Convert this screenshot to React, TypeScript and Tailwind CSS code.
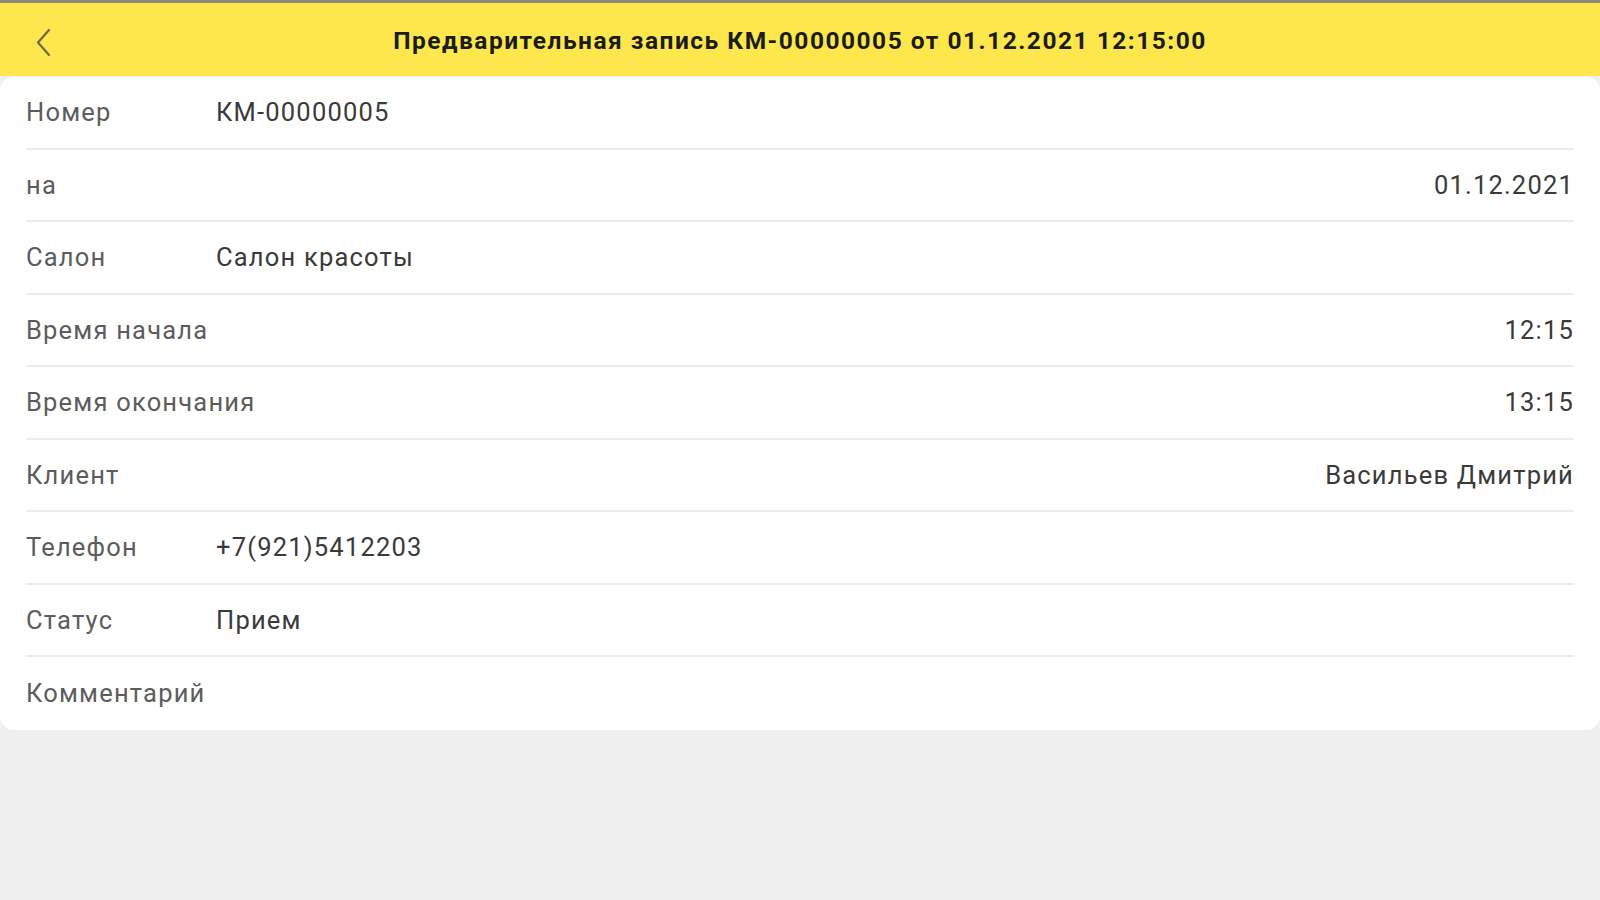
const rows: { label: string; value: string; right?: boolean }[] = [
  { label: "Номер", value: "КМ-00000005" },
  { label: "на", value: "01.12.2021", right: true },
  { label: "Салон", value: "Салон красоты" },
  { label: "Время начала", value: "12:15", right: true },
  { label: "Время окончания", value: "13:15", right: true },
  { label: "Клиент", value: "Васильев Дмитрий", right: true },
  { label: "Телефон", value: "+7(921)5412203" },
  { label: "Статус", value: "Прием" },
  { label: "Комментарий", value: "" },
]

export default function App() {
  return (
    <div className="flex min-h-screen w-full flex-col bg-[#efefef] font-['Roboto',sans-serif]">
      <div className="h-[3px] bg-[#8a8a7a]" />
      <header className="relative flex h-[73px] items-center justify-center bg-[#fde74c]">
        <button type="button" className="absolute left-[30px] top-[21px] p-1">
          <svg width="18" height="29" viewBox="0 0 18 29" fill="none">
            <path d="M15 2 L4 14.5 L15 27" stroke="#6d6a4a" strokeWidth="2.2" strokeLinecap="round" strokeLinejoin="round" />
          </svg>
        </button>
        <h1 className="mt-[3px] text-[24.5px] font-bold tracking-[1.5px] text-[#1b1b1b]">
          Предварительная запись КМ-00000005 от 01.12.2021 12:15:00
        </h1>
      </header>
      <div className="mt-[1px] rounded-[14px] bg-white">
        {rows.map((r, i) => (
          <div
            key={r.label}
            className={`mx-[26px] flex h-[72.5px] items-center text-[25.5px] tracking-[1.2px] ${
              i === rows.length - 1 ? "" : "border-b-2 border-[#ececec]"
            }`}
          >
            <span className="w-[190px] shrink-0 whitespace-nowrap text-[#5c5c5c]">{r.label}</span>
            {r.right ? (
              <span className="ml-auto text-[#3a3a3a]">{r.value}</span>
            ) : (
              <span className="text-[#3a3a3a]">{r.value}</span>
            )}
          </div>
        ))}
      </div>
    </div>
  )
}
